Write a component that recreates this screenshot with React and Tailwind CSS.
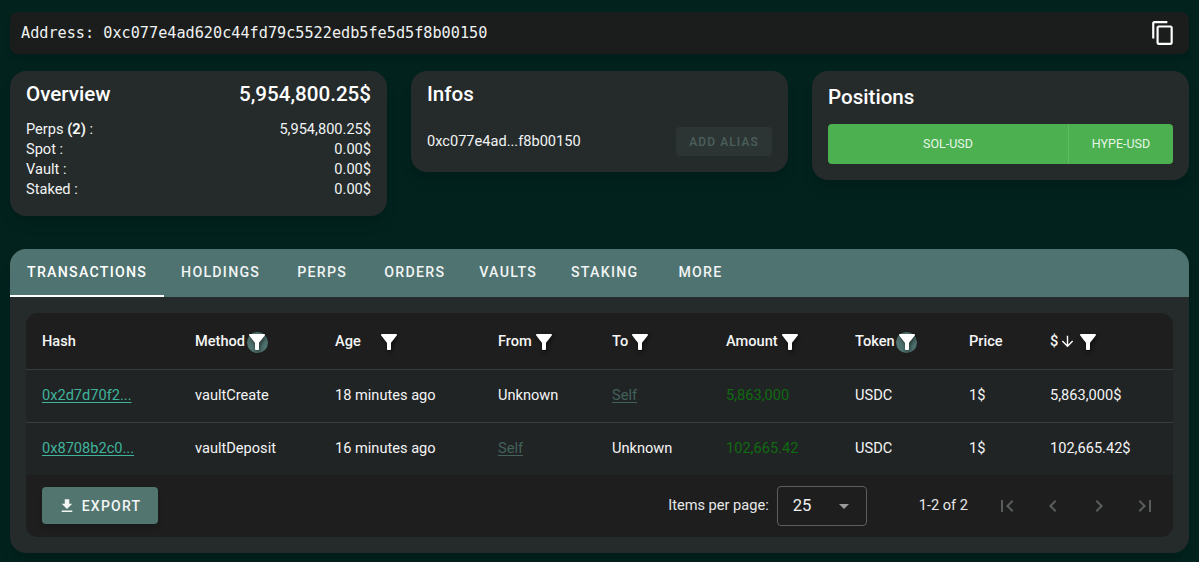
const P = {
  filter: "M4.25 5.61C6.27 8.2 10 13 10 13v6c0 .55.45 1 1 1h2c.55 0 1-.45 1-1v-6s3.72-4.8 5.74-7.39c.51-.66.04-1.61-.79-1.61H5.04c-.83 0-1.3.95-.79 1.61z",
  copy: "M16 1H4c-1.1 0-2 .9-2 2v14h2V3h12V1zm3 4H8c-1.1 0-2 .9-2 2v14c0 1.1.9 2 2 2h11c1.1 0 2-.9 2-2V7c0-1.1-.9-2-2-2zm0 16H8V7h11v14z",
  download: "M19 9h-4V3H9v6H5l7 7 7-7zM5 18v2h14v-2H5z",
  first: "M18.41 16.59L13.82 12l4.59-4.59L17 6l-6 6 6 6zM6 6h2v12H6z",
  last: "M5.59 7.41L10.18 12l-4.59 4.59L7 18l6-6-6-6zM16 6h2v12h-2z",
  left: "M15.41 16.59L10.83 12l4.58-4.59L14 6l-6 6 6 6 1.41-1.41z",
  right: "M8.59 16.59L13.17 12 8.59 7.41 10 6l6 6-6 6-1.41-1.41z",
  down: "M20 12l-1.41-1.41L13 16.17V4h-2v12.17l-5.58-5.59L4 12l8 8 8-8z",
};

function Icon({ d, className }) {
  return (
    <svg viewBox="0 0 24 24" fill="currentColor" className={className}>
      <path d={d} />
    </svg>
  );
}

function Filter({ active, wide }) {
  return (
    <span className={`relative flex h-6 w-6 shrink-0 items-center justify-center ${wide ? "ml-4" : ""}`}>
      {active && <span className="absolute left-[1.5px] top-[2.5px] h-[21px] w-[21px] rounded-full bg-[#4f7370]" />}
      <Icon d={P.filter} className="relative h-6 w-6 text-white drop-shadow-[1px_2px_2px_rgba(0,0,0,0.6)]" />
    </span>
  );
}

const GRID = "grid grid-cols-[153px_140px_163px_114px_114px_129px_114px_81px_1fr] items-center pl-4";

function Row({ label, value }) {
  return (
    <div className="flex h-5 items-center justify-between text-[14.6px] text-[#f2f4f4]">
      <span>{label}</span>
      <span>{value}</span>
    </div>
  );
}

const TABS = ["TRANSACTIONS", "HOLDINGS", "PERPS", "ORDERS", "VAULTS", "STAKING", "MORE"];

function Link({ children, muted }) {
  return (
    <span className={`underline underline-offset-2 ${muted ? "text-[#42615b]" : "text-[#3fb39b]"}`}>{children}</span>
  );
}

export default function App() {
  return (
    <div
      className="h-[562px] overflow-hidden bg-[#02221e] px-[10px] pt-3 text-white"
      style={{ fontFamily: "Roboto, sans-serif" }}
    >
      <div className="flex h-[42px] items-center justify-between rounded-lg bg-[#1b1d1c] pl-[11px] pr-[13px] shadow-md">
        <span className="text-[15.2px] text-[#f0f2f2]" style={{ fontFamily: '"DejaVu Sans Mono", monospace' }}>
          Address: 0xc077e4ad620c44fd79c5522edb5fe5d5f8b00150
        </span>
        <Icon d={P.copy} className="h-[26px] w-[26px] text-white" />
      </div>

      <div className="mt-[17px] grid grid-cols-3 items-start gap-x-6">
        <section className="h-[145px] rounded-2xl bg-[#252b2b] px-4 pt-[7px] shadow-lg">
          <div className="flex h-[32px] items-center justify-between text-[20.6px] font-medium">
            <span>Overview</span>
            <span>5,954,800.25$</span>
          </div>
          <div className="mt-[10px]">
            <Row label={<>Perps <b className="font-bold">(2)</b> :</>} value="5,954,800.25$" />
            <Row label="Spot :" value="0.00$" />
            <Row label="Vault :" value="0.00$" />
            <Row label="Staked :" value="0.00$" />
          </div>
        </section>

        <section className="h-[101px] rounded-2xl bg-[#252b2b] px-4 pt-[7px] shadow-lg">
          <div className="flex h-[32px] items-center text-[20.6px] font-medium">Infos</div>
          <div className="mt-[17px] flex items-center justify-between">
            <span className="text-[14.6px] text-[#f2f4f4]">0xc077e4ad...f8b00150</span>
            <button className="flex h-[29px] w-[96px] items-center justify-center rounded bg-[#2d3534] text-[12px] font-medium tracking-[1.1px] text-[#4a5f5b]">
              ADD ALIAS
            </button>
          </div>
        </section>

        <section className="h-[109px] rounded-2xl bg-[#252b2b] px-4 pt-[10px] shadow-lg">
          <div className="flex h-[32px] items-center text-[20.6px] font-medium">Positions</div>
          <div className="mt-[11px] flex h-[40px] text-[12.5px] text-[#e6f6e7]">
            <div className="flex w-[241px] items-center justify-center rounded-l-sm border-r border-[#5fbb63] bg-[#4caf50]">SOL-USD</div>
            <div className="flex flex-1 items-center justify-center rounded-r-sm bg-[#4caf50]">HYPE-USD</div>
          </div>
        </section>
      </div>

      <section className="mt-[33px] h-[304px] overflow-hidden rounded-2xl bg-[#252b2b] shadow-lg">
        <div className="flex h-[48px] bg-[#4f7370] text-[14.2px] font-medium tracking-[1.25px]">
          {TABS.map((t, i) => (
            <div
              key={t}
              className={`flex min-w-[90px] items-center justify-center border-y-2 border-t-transparent px-[17px] ${i === 0 ? "border-b-white text-white" : "border-b-transparent text-[#f1f4f4]"}`}
            >
              {t}
            </div>
          ))}
        </div>

        <div className="mx-4 mt-4 h-[224px] overflow-hidden rounded-xl bg-[#1e1e1e] text-[14.6px]">
          <div className={`${GRID} h-[57px] border-b border-[#3a3d3d] pt-px font-medium text-[#f4f5f5]`}>
            <span>Hash</span>
            <span className="flex items-center">Method<Filter active /></span>
            <span className="flex items-center">Age<Filter wide /></span>
            <span className="flex items-center">From<Filter /></span>
            <span className="flex items-center">To<Filter /></span>
            <span className="flex items-center">Amount<Filter /></span>
            <span className="flex items-center">Token<Filter active /></span>
            <span>Price</span>
            <span className="flex items-center">$<Icon d={P.down} className="ml-[0.5px] h-[17px] w-[17px] text-white" /><Filter /></span>
          </div>

          <div className={`${GRID} h-[53px] border-b border-[#3a3d3d] bg-[#212425] pb-px text-[#f4f5f5]`}>
            <span><Link>0x2d7d70f2...</Link></span>
            <span>vaultCreate</span>
            <span>18 minutes ago</span>
            <span>Unknown</span>
            <span><Link muted>Self</Link></span>
            <span className="text-[#0f6b10]">5,863,000</span>
            <span>USDC</span>
            <span>1$</span>
            <span>5,863,000$</span>
          </div>

          <div className={`${GRID} h-[52px] bg-[#212425] text-[#f4f5f5]`}>
            <span><Link>0x8708b2c0...</Link></span>
            <span>vaultDeposit</span>
            <span>16 minutes ago</span>
            <span><Link muted>Self</Link></span>
            <span>Unknown</span>
            <span className="text-[#0f6b10]">102,665.42</span>
            <span>USDC</span>
            <span>1$</span>
            <span>102,665.42$</span>
          </div>

          <div className="flex h-[62px] items-center justify-between pl-4 pr-[16px]">
            <button className="mb-px flex h-[37px] w-[116px] items-center justify-center gap-[6px] rounded bg-[#52756f] pr-[1px] text-sm font-medium tracking-[1.25px] text-[#f4f6f6] shadow-md">
              <Icon d={P.download} className="h-[18px] w-[18px]" />
              EXPORT
            </button>
            <div className="flex items-center text-[#e6e8e8]">
              <span>Items per page:</span>
              <div className="ml-2 flex h-10 w-[90px] items-center justify-between rounded border border-[#5d5f5f] pl-[15px] pr-[17px] text-[16.6px] text-[#f0f1f1]">
                <span>25</span>
                <span className="h-0 w-0 border-x-[5.5px] border-t-[5px] border-x-transparent border-t-[#9a9c9c]" />
              </div>
              <span className="ml-[52px] mr-[27px]">1-2 of 2</span>
              <div className="flex gap-[22px] text-[#5a5d5d]">
                <Icon d={P.first} className="h-6 w-6" />
                <Icon d={P.left} className="h-6 w-6" />
                <Icon d={P.right} className="h-6 w-6" />
                <Icon d={P.last} className="h-6 w-6" />
              </div>
            </div>
          </div>
        </div>
      </section>
    </div>
  );
}
